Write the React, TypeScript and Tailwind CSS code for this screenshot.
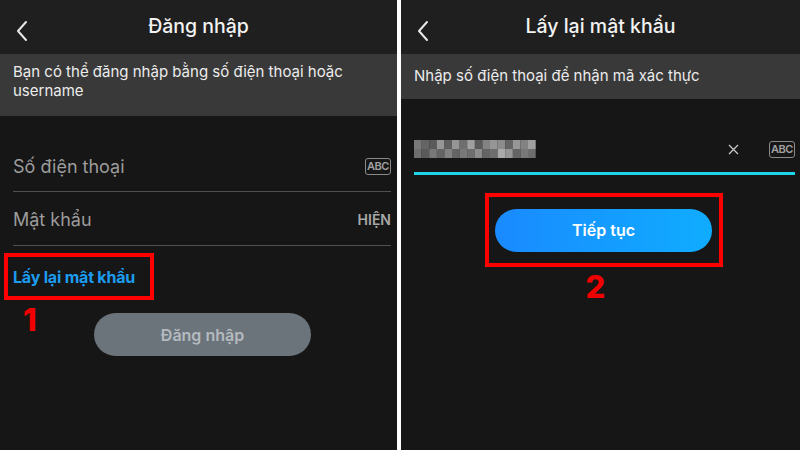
import React from "react";

const font = { fontFamily: "Inter, 'Noto Sans', sans-serif" };

function BackChevron() {
  return (
    <svg width="14" height="22" viewBox="0 0 14 22" className="shrink-0">
      <path d="M11 2 L3 11 L11 20" fill="none" stroke="#e8e8e8" strokeWidth="2" strokeLinecap="round" strokeLinejoin="round" />
    </svg>
  );
}

function AbcBadge() {
  return (
    <span className="flex h-[17px] w-[26px] items-center justify-center rounded-[3px] border-[1.5px] border-[#8a8a8a] text-[11px] font-semibold leading-none tracking-[-0.4px] text-[#a0a0a0]">
      ABC
    </span>
  );
}

// Blurred-out phone number, drawn as a mosaic of grey tiles
const mosaic = [
  [120, 100, 90, 150, 95, 150, 110, 160, 90, 130, 150, 140, 100, 150, 130, 160],
  [110, 90, 120, 100, 130, 100, 120, 110, 140, 100, 110, 170, 150, 100, 120, 110],
];

function Mosaic() {
  return (
    <svg width="122" height="18" viewBox="0 0 122 18">
      {mosaic.map((row, r) =>
        row.map((v, c) => (
          <rect key={`${r}-${c}`} x={c * 7.6} y={r * 9} width="7.7" height="9" fill={`rgb(${v},${v},${v})`} />
        ))
      )}
    </svg>
  );
}

function Header({ title }: { title: string }) {
  return (
    <div className="relative flex h-[54px] items-center justify-center bg-[#1f1f1f]">
      <div className="absolute left-[15px] top-[20px]">
        <BackChevron />
      </div>
      <span className="text-[19.5px] font-medium text-[#f2f2f2]">{title}</span>
    </div>
  );
}

export default function App() {
  return (
    <div className="flex h-[450px] w-[800px] overflow-hidden bg-white" style={font}>
      {/* Login screen */}
      <div className="flex w-[397px] shrink-0 flex-col bg-[#161616]">
        <Header title="Đăng nhập" />
        <div className="h-[62px] bg-[#393939] px-[13px] pt-[8px] text-[15px] leading-[19px] text-[#ececec]">
          Bạn có thể đăng nhập bằng số điện thoại hoặc username
        </div>
        <div className="flex flex-col pl-[13px] pr-[6px] pt-[32px]">
          <div className="flex h-[44px] items-center justify-between border-b border-[#505050] pb-[6px]">
            <span className="text-[18px] text-[#9c9c9c]">Số điện thoại</span>
            <AbcBadge />
          </div>
          <div className="flex h-[54px] items-center justify-between border-b border-[#505050] pt-[2px]">
            <span className="text-[18px] text-[#9c9c9c]">Mật khẩu</span>
            <span className="text-[14px] font-semibold text-[#a8a8a8]">HIỆN</span>
          </div>
        </div>
        <div className="ml-[4px] mt-[7px] flex h-[47px] w-[150px] items-center border-[4px] border-[#ff0000] pl-[5px]">
          <span className="text-[16px] font-bold tracking-[-0.2px] text-[#1c9cf0]">Lấy lại mật khẩu</span>
        </div>
        <div className="relative flex justify-center">
          <span className="absolute left-[23px] top-[4px] text-[31px] font-extrabold leading-none text-[#f00000]">1</span>
          <div className="ml-[8px] mt-[13px] flex h-[43px] w-[217px] items-center justify-center rounded-full bg-[#6b737b]">
            <span className="text-[16px] font-semibold text-[#b4babf]">Đăng nhập</span>
          </div>
        </div>
      </div>

      <div className="w-[4px] shrink-0 bg-white" />

      {/* Password recovery screen */}
      <div className="flex flex-1 flex-col bg-[#161616]">
        <Header title="Lấy lại mật khẩu" />
        <div className="flex h-[45px] items-center bg-[#393939] px-[13px] text-[15px] text-[#ececec]">
          Nhập số điện thoại để nhận mã xác thực
        </div>
        <div className="flex flex-col pl-[13px] pr-[5px] pt-[41px]">
          <div className="flex h-[35px] items-start justify-between border-b-[3px] border-[#1fd3ea]">
            <Mosaic />
            <div className="flex items-center gap-[30px] pt-[1px]">
              <svg width="11" height="11" viewBox="0 0 11 11">
                <path d="M1 1 L10 10 M10 1 L1 10" stroke="#c8c8c8" strokeWidth="1.3" />
              </svg>
              <AbcBadge />
            </div>
          </div>
        </div>
        <div className="flex flex-col items-center">
          <div className="ml-[6px] mt-[18px] flex h-[74px] w-[238px] items-center justify-center border-[4px] border-[#ff0000]">
            <div className="flex h-[43px] w-[217px] items-center justify-center rounded-full bg-gradient-to-r from-[#1a8aff] to-[#10acff]">
              <span className="text-[16px] font-semibold text-white">Tiếp tục</span>
            </div>
          </div>
          <span className="mr-[10px] mt-[4px] text-[31px] font-extrabold leading-none text-[#f00000]">2</span>
        </div>
      </div>
    </div>
  );
}
